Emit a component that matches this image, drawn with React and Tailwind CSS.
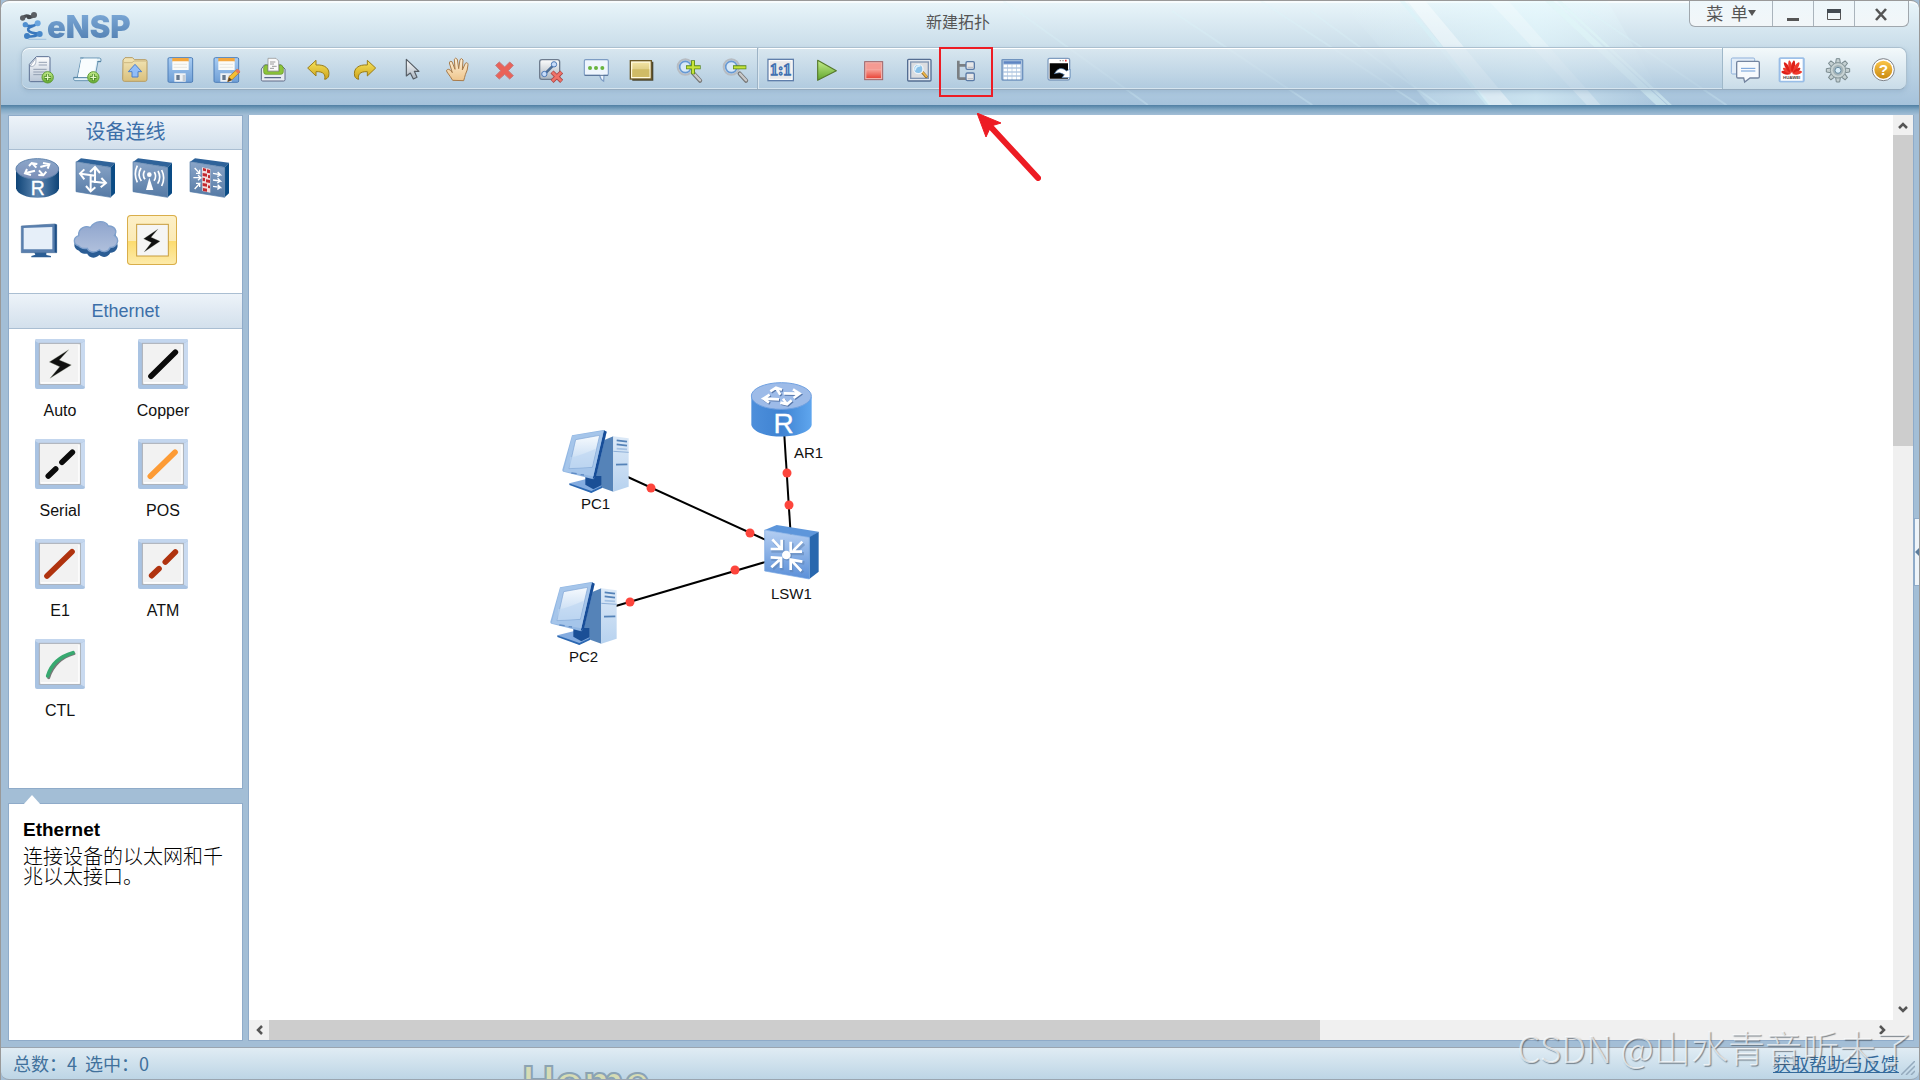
import React, { useState } from 'react';

// shared gradients, referenced by id from every icon below
function Gradients() {
  const list = [
    ['gPage', '#ffffff', '#b9c6d6'],
    ['gFolder', '#f3e6b8', '#d9c07c'],
    ['gDisk', '#a9cdf3', '#6f9fd6'],
    ['gYellow', '#f7e45c', '#cda31c'],
    ['gGreen', '#c6ee8c', '#5fa52c'],
    ['gRed', '#f8a49a', '#e9483b'],
    ['gSteel', '#fdfdfd', '#a9b4bf'],
    ['gNote', '#f1e2a2', '#cdb968'],
    ['gHand', '#fdf0d8', '#eec58c'],
    ['gHelp', '#fbc54a', '#c98a12'],
    ['gDevTop', '#8ba6c9', '#7c8fb8'],
    ['gDevice', '#8aa5c8', '#557aa5'],
    ['gCloud', '#8fa5cd', '#b0c0dc'],
    ['gSwitch', '#b5cff2', '#5a8fd8'],
    ['gScreen', '#f6fafe', '#b9d3ef'],
    ['gTower', '#dce9f7', '#b7d2ef'],
  ];
  return (
    <svg className="absolute h-0 w-0" aria-hidden="true">
      <defs>
        {list.map(([id, from, to]) => (
          <linearGradient key={id} id={id} x1="0" y1="0" x2="0" y2="1">
            <stop offset="0" stopColor={from} />
            <stop offset="1" stopColor={to} />
          </linearGradient>
        ))}
        <linearGradient id="gCylinder" x1="0" y1="0" x2="1" y2="0">
          <stop offset="0" stopColor="#0f4477" />
          <stop offset="0.5" stopColor="#5f88b3" />
          <stop offset="1" stopColor="#0f4477" />
        </linearGradient>
        <linearGradient id="gCylinderLight" x1="0" y1="0" x2="1" y2="0">
          <stop offset="0" stopColor="#4d8fdb" />
          <stop offset="0.5" stopColor="#3f83d2" />
          <stop offset="1" stopColor="#5fa6ee" />
        </linearGradient>
      </defs>
    </svg>
  );
}

const Plus = ({ x, y }) => (
  <g>
    <circle cx={x} cy={y} r="17" fill="url(#gGreen)" stroke="#5f9c35" strokeWidth="3" />
    <path d={`M${x - 10} ${y}h20M${x} ${y - 10}v20`} stroke="#3f7d1d" strokeWidth="8" />
    <path d={`M${x - 9} ${y}h18M${x} ${y - 9}v18`} stroke="#e4f9c4" strokeWidth="4" />
  </g>
);

const Disk = () => (
  <g>
    <rect x="12" y="14" width="74" height="74" rx="4" fill="url(#gDisk)" stroke="#4f7fb8" strokeWidth="3" />
    <path d="M25 15h49v12H25z" fill="#f4a840" />
    <path d="M25 25h49v26H25z" fill="#fbfbf8" />
    <path d="M29 34h40M29 43h40" stroke="#dcdcd8" strokeWidth="2" />
    <path d="M31 61h34v25H31z" fill="#eef1f4" />
    <path d="M37 66h10v15H37z" fill="#66788e" />
    <path d="M56 66h8v19h-8z" fill="#c5ccd3" />
  </g>
);

const Lens = () => (
  <g>
    <path d="M62 62L81 83" stroke="#777" strokeWidth="13" strokeLinecap="round" />
    <path d="M63 62L81 82" stroke="#c9c9c9" strokeWidth="7" strokeLinecap="round" />
    <circle cx="37" cy="42" r="23" fill="#c9dcef" stroke="#b7bcc2" strokeWidth="6" />
    <circle cx="37" cy="42" r="17" fill="#d8e9f8" stroke="#6799d3" strokeWidth="5" />
  </g>
);

const Undo = () => (
  <path
    d="M14 45L39 22v14c26-2 43 10 38 33-2 6-6 9-12 10 3-14-3-24-26-23v13z"
    fill="url(#gYellow)"
    stroke="#9a7d18"
    strokeWidth="3"
    strokeLinejoin="round"
  />
);

const toolIcons = {
  new: (
    <g>
      <path d="M13 34L34 11h37q4 0 4 4v67q0 4-4 4H17q-4 0-4-4z" fill="url(#gPage)" stroke="#5b6f92" strokeWidth="3" />
      <path d="M15 40q20 4 18-25z" fill="#fff" stroke="#8795ac" strokeWidth="2" />
      <path d="M41 28h25M41 36h25M25 49h40M25 57h40M25 65h28" stroke="#8492a6" strokeWidth="2.5" />
      <Plus x={68} y={73} />
    </g>
  ),
  newTopo: (
    <g>
      <path d="M28 15h57q7 0 5 10h-9L70 83H12q-6-1-4-10h11L29 24q2-7 8-9z" fill="#e3f1f8" stroke="#6995b4" strokeWidth="3" />
      <path d="M31 17h47L66 73H21z" fill="#f8fcfe" />
      <path d="M8 74h50M79 26h11" stroke="#4f7f9f" strokeWidth="3" />
      <Plus x={67} y={73} />
    </g>
  ),
  open: (
    <g>
      <path d="M15 21l6-7h22l7 6h32q5 0 5 5v53q0 7-5 7H19q-5 0-5-6z" fill="url(#gFolder)" stroke="#b69c62" strokeWidth="3" />
      <path d="M18 29h24l6-5h36" stroke="#bda569" strokeWidth="2" fill="none" />
      <path d="M51 34l20 22H60v16H42V56H31z" fill="#91bdf8" stroke="#4e7fc9" strokeWidth="3" strokeLinejoin="round" />
    </g>
  ),
  save: <Disk />,
  saveAs: (
    <g>
      <Disk />
      <path d="M53 86l4-15 24-22 9 8-24 23z" fill="#f4c033" stroke="#a56c25" strokeWidth="2" />
      <path d="M76 54l7-7 8 8-7 7z" fill="#e7785c" />
      <path d="M53 86l4-13 9 8z" fill="#5a3e22" />
    </g>
  ),
  print: (
    <g>
      <path d="M25 36h50l12 12v32q0 4-4 4H20q-4 0-4-4V48z" fill="#e7ecf2" stroke="#606b88" strokeWidth="3" />
      <path d="M27 36h8v20h34V36h8l5 8v12q0 8-8 8H30q-7 0-7-8V44z" fill="#8cc53a" stroke="#628e25" strokeWidth="2" />
      <path d="M36 16h24l8 8v30H36z" fill="#fafafa" stroke="#878787" strokeWidth="2" />
      <path d="M42 27h16M42 33h12M48 40h14M42 46h12" stroke="#888" strokeWidth="2.5" />
      <path d="M25 74h50" stroke="#5a6789" strokeWidth="4" />
    </g>
  ),
  undo: <Undo />,
  redo: (
    <g transform="matrix(-1 0 0 1 94 0)">
      <Undo />
    </g>
  ),
  select: (
    <path d="M34 19v50l12-9 9 18 11-5-8-18h14z" fill="url(#gSteel)" stroke="#555c64" strokeWidth="3.5" strokeLinejoin="round" />
  ),
  hand: (
    <path
      d="M35 82Q29 72 18 57q-4-8 5-8 6 1 11 10L25 30q1-8 8-4l9 23-2-30q3-7 9 0l4 28 4-27q5-7 9 1l-2 30 9-20q7-5 8 4-1 17-8 30-2 8-5 18z"
      fill="url(#gHand)"
      stroke="#a77b4b"
      strokeWidth="3"
      strokeLinejoin="round"
    />
  ),
  remove: (
    <path
      d="M23 37l11-10 16 15 15-15 11 10-15 16 15 15-11 10-15-14-16 14-11-10 15-15z"
      fill="#ea6258"
      stroke="#c2787c"
      strokeWidth="3"
      strokeLinejoin="round"
    />
  ),
  removeLink: (
    <g>
      <rect x="17" y="20" width="60" height="59" rx="7" fill="url(#gSteel)" stroke="#6e7c8e" strokeWidth="4" />
      <path d="M31 64L61 34" stroke="#4e6f98" strokeWidth="8" />
      <circle cx="60" cy="34" r="8" fill="#c6dcfa" stroke="#4d79b5" strokeWidth="3" />
      <circle cx="31" cy="63" r="8" fill="#c6dcfa" stroke="#4d79b5" strokeWidth="3" />
      <path d="M54 57l29 28M83 57L54 85" stroke="#a94545" strokeWidth="13" />
      <path d="M55 58l27 26M82 58L55 84" stroke="#ef7267" strokeWidth="8" />
    </g>
  ),
  text: (
    <g>
      <path d="M17 20h64q4 0 4 4v39q0 4-4 4h-9l-1 18q-9-5-12-18H17q-4 0-4-4V24q0-4 4-4z" fill="#eef5fd" stroke="#7e9dc4" strokeWidth="3.5" />
      <path d="M14 67h70" stroke="#567095" strokeWidth="3" />
      <circle cx="30" cy="45" r="6" fill="#68b43f" />
      <circle cx="48" cy="45" r="6" fill="#68b43f" />
      <circle cx="67" cy="45" r="6" fill="#68b43f" />
    </g>
  ),
  palette: (
    <g>
      <path d="M15 26h67v57H19z" fill="#4b4732" />
      <rect x="13" y="23" width="63" height="55" fill="#fff9dc" stroke="#6c5928" strokeWidth="4" />
      <path d="M19 29h51v43H19z" fill="url(#gNote)" />
      <path d="M19 49h51v23H19z" fill="#d0bb65" />
    </g>
  ),
  zoomIn: (
    <g>
      <Lens />
      <path d="M39 43h44M60 22v42" stroke="#57851b" strokeWidth="12" />
      <path d="M41 43h40M60 24v38" stroke="#c6e43b" strokeWidth="7" />
    </g>
  ),
  zoomOut: (
    <g>
      <Lens />
      <path d="M42 43h40" stroke="#57851b" strokeWidth="12" />
      <path d="M44 43h36" stroke="#c6e43b" strokeWidth="7" />
    </g>
  ),
  actual: (
    <g>
      <rect x="9" y="19" width="76" height="64" fill="#e9e9ea" stroke="#607fab" strokeWidth="4" />
      <rect x="13" y="23" width="68" height="56" fill="none" stroke="#fff" strokeWidth="3" />
      <text x="47" y="67" textAnchor="middle" fontFamily="Liberation Serif, serif" fontWeight="700" fontSize="48" fill="#a9cdf5" stroke="#3f6fae" strokeWidth="4">
        1:1
      </text>
    </g>
  ),
  start: (
    <path d="M20 22l56 31-56 29z" fill="url(#gGreen)" stroke="#55792c" strokeWidth="3.5" strokeLinejoin="round" />
  ),
  stop: (
    <g>
      <rect x="20" y="26" width="54" height="54" fill="#f2b1ab" stroke="#9e6569" strokeWidth="3" />
      <rect x="25" y="31" width="44" height="18" fill="#f59a92" />
      <rect x="25" y="49" width="44" height="26" fill="url(#gRed)" />
    </g>
  ),
  capture: (
    <g>
      <rect x="11" y="19" width="70" height="65" rx="3" fill="#e3e8ef" stroke="#546d92" strokeWidth="4" />
      <rect x="20" y="27" width="53" height="49" fill="#dbdde0" stroke="#8195b2" strokeWidth="4" />
      <path d="M55 58l12 13" stroke="#8d6a2a" strokeWidth="9" strokeLinecap="round" />
      <path d="M55 57l12 13" stroke="#f1b747" strokeWidth="5" strokeLinecap="round" />
      <circle cx="43" cy="48" r="14" fill="#8ac2ea" stroke="#eef3f7" strokeWidth="4" />
      <path d="M33 52q2-15 16-13" stroke="#d9effc" strokeWidth="5" fill="none" />
    </g>
  ),
  tree: (
    <g>
      <path d="M25 23v51q0 3 3 3h22M25 37h25" fill="none" stroke="#7b7f83" strokeWidth="8" />
      <rect x="48" y="26" width="25" height="23" rx="4" fill="#e7e7e8" stroke="#5b7ba6" strokeWidth="4" />
      <rect x="48" y="60" width="25" height="23" rx="4" fill="#e7e7e8" stroke="#5b7ba6" strokeWidth="4" />
      <path d="M53 43h16M53 77h16" stroke="#c0c2c5" strokeWidth="4" />
    </g>
  ),
  table: (
    <g>
      <rect x="15" y="20" width="62" height="61" rx="2" fill="#adc4df" stroke="#6f93bf" strokeWidth="4" />
      <path d="M20 25h52v7H20z" fill="#5f86c3" />
      {[35, 47, 59, 71].map((y) =>
        [20, 33, 46, 59].map((x) => <rect key={`${x}-${y}`} x={x} y={y} width="11" height="8" fill="#fdfefe" />)
      )}
    </g>
  ),
  console: (
    <g>
      <rect x="15" y="16" width="65" height="65" rx="5" fill="#fff" stroke="#7f9cbf" strokeWidth="4" />
      <path d="M20 31h55v46H20z" fill="#050505" />
      <path d="M50 23h4M58 23h4" stroke="#999" strokeWidth="4" />
      <path d="M66 23h5" stroke="#e34040" strokeWidth="5" />
      <path d="M34 62q16-27 37-8l10-6v26H57l7-9q-12-10-30-3z" fill="#fff" stroke="#4f7fb3" strokeWidth="2" />
    </g>
  ),
  forum: (
    <g>
      <rect x="4" y="15" width="70" height="48" rx="4" fill="#e2edf8" stroke="#8fb1da" strokeWidth="3" />
      <path d="M24 25h60q4 0 4 4v42q0 4-4 4H60L44 87l-3-12H24q-4 0-4-4V29q0-4 4-4z" fill="#f7fafd" stroke="#7485a0" strokeWidth="4" />
      <path d="M33 46h43M33 54h43" stroke="#6b9bd6" strokeWidth="3" />
    </g>
  ),
  site: (
    <g>
      <rect x="9" y="14" width="76" height="73" rx="4" fill="#9fc2ea" stroke="#8fb6e3" strokeWidth="2" />
      <path d="M14 18h66v65H14z" fill="#fff" />
      {[-76, -54, -32, -10, 10, 32, 54, 76].map((a, i) => (
        <path key={a} d="M0-4C-8-16-9-32-2-42H2C9-32 8-16 0-4z" fill={i % 2 ? '#f0392c' : '#dd2018'} transform={`translate(47 64) rotate(${a}) scale(.8 ${Math.abs(a) > 50 ? 0.75 : 1})`} />
      ))}
      <text x="47" y="79" textAnchor="middle" fontFamily="Liberation Sans, sans-serif" fontWeight="700" fontSize="13" fill="#444">
        HUAWEI
      </text>
    </g>
  ),
  settings: (
    <g>
      {[0, 45, 90, 135, 180, 225, 270, 315].map((a) => (
        <path key={a} d="M-7-22L-5-35H5L7-22z" fill="#c4d0d2" stroke="#7b8b90" strokeWidth="3" transform={`translate(51 52) rotate(${a})`} />
      ))}
      <circle cx="51" cy="52" r="23" fill="#c8d3d4" stroke="#8b9b9f" strokeWidth="3" />
      <circle cx="51" cy="52" r="16" fill="#a4b4b9" />
      <circle cx="51" cy="52" r="9" fill="#d8edf8" stroke="#6b8da2" strokeWidth="3" />
    </g>
  ),
  help: (
    <g>
      <circle cx="49" cy="50" r="33" fill="#fff" stroke="#7d8187" strokeWidth="3" />
      <circle cx="49" cy="50" r="27" fill="url(#gHelp)" />
      <text x="49" y="67" textAnchor="middle" fontFamily="Liberation Sans, sans-serif" fontWeight="700" fontSize="46" fill="#fff">
        ?
      </text>
    </g>
  ),
};

const mainTools = [
  ['new', 'New'], ['newTopo', 'New topology'], ['open', 'Open'], ['save', 'Save'], ['saveAs', 'Save as'],
  ['print', 'Print'], ['undo', 'Undo'], ['redo', 'Redo'], ['select', 'Select'], ['hand', 'Drag'],
  ['remove', 'Delete'], ['removeLink', 'Delete link'], ['text', 'Text'], ['palette', 'Palette'],
  ['zoomIn', 'Zoom in'], ['zoomOut', 'Zoom out'],
];
const runTools = [
  ['actual', 'Actual size'], ['start', 'Start'], ['stop', 'Stop'], ['capture', 'Capture'],
  ['tree', 'Tree'], ['table', 'Interfaces'], ['console', 'Console'],
];
const sideTools = [['forum', 'Forum'], ['site', 'Website'], ['settings', 'Settings'], ['help', 'Help']];

function ToolButton({ name, label }) {
  return (
    <button type="button" aria-label={label} className="relative h-8 w-8 shrink-0">
      <svg viewBox="0 0 96 96" className="h-8 w-8">{toolIcons[name]}</svg>
      {name === 'tree' && <span className="absolute -inset-x-[11px] -top-1.5 -bottom-3 border-2 border-[#ed1c24]" />}
    </button>
  );
}

const Box = ({ children }) => (
  <g>
    <path d="M19 26l14-10 102 13-13 14z" fill="#2f639a" />
    <path d="M122 43l13-14v92l-13 12z" fill="#0a4b85" />
    <path d="M18 26l104 17v90L18 116z" fill="url(#gDevice)" stroke="#557ca8" strokeWidth="2" />
    {children}
  </g>
);

const Bolt = ({ x, y }) => (
  <path d="M58 0L0 37l31 14L2 86l64-40L30 31z" transform={`translate(${x} ${y})`} fill="#101010" stroke="#99a08c" strokeWidth="1" />
);

const deviceIcons = {
  router: (
    <g>
      <path d="M9 50v56c8 38 121 38 129 0V50z" fill="url(#gCylinder)" />
      <ellipse cx="73" cy="48" rx="64" ry="31" fill="url(#gDevTop)" stroke="#5e82ac" strokeWidth="3" />
      <g stroke="#fff" strokeWidth="6" fill="none">
        <path d="M70 44L58 31M48 39l8-9 17 3M66 53L38 60M42 48l-6 13 18 5M82 42l24-7M90 30l19 4-5 13M78 52l12 14M76 66l15 1 9-11" />
      </g>
      <text x="74" y="127" textAnchor="middle" fontFamily="Liberation Sans, sans-serif" fontSize="58" fill="#fff" stroke="#fff" strokeWidth="1">
        R
      </text>
    </g>
  ),
  switch: (
    <Box>
      <g stroke="#fff" strokeWidth="6" fill="none">
        <path d="M75 44v46M32 62l44 6M62 113V66M106 90l-46-5" />
        <path d="M60 57l15-15 15 18M43 49L30 62l13 17M48 99l14 16 14-12M94 75l14 15-16 13" />
      </g>
    </Box>
  ),
  wireless: (
    <Box>
      <path d="M67 74l12 37H57z" fill="#fff" />
      <circle cx="67" cy="65" r="7" fill="#fff" />
      <g stroke="#fff" strokeWidth="5" fill="none">
        <path d="M53 53q-8 14 1 26M42 45q-12 20 1 39M31 38q-12 25 0 50M82 57q8 14-1 26M93 54q11 19-1 38M104 51q12 24 0 48" />
      </g>
    </Box>
  ),
  firewall: (
    <Box>
      <path d="M54 43l25 5v71l-24-5z" fill="#f1dcdc" />
      <g fill="#c32a30">
        <path d="M57 45l9 2v8l-9-2zM69 49l9 2v10l-9-2zM56 60l13 2v9l-13-2zM72 66l6 1v9l-6-1zM56 74l7 1v10l-7-1zM66 79l12 2v9l-12-2zM56 90l13 2v9l-13-2zM72 97l6 1v8l-6-1zM57 105l12 2v9l-12-2z" />
      </g>
      <g stroke="#fff" strokeWidth="4" fill="none">
        <path d="M32 45l15 16v-11M47 61H36M28 74h22l-8-8M50 74l-8 8M32 108l15-17H36M47 91v11M87 61l22 4-8-8M109 65l-9 6M87 81l22 3-8-8M109 84l-9 6M87 100l22 3-8-8M109 103l-9 6" />
      </g>
    </Box>
  ),
  terminal: (
    <g>
      <path d="M62 108h38v12l14 3v4H55v-4l12-4z" fill="#2a5d94" />
      <path d="M25 33l100-6 6 2v84H25z" fill="#597fae" stroke="#4b719d" strokeWidth="2" />
      <path d="M125 27l6 2v84l-6-2z" fill="#1d4f86" />
      <path d="M32 39l86-3v67H32z" fill="#e6eff9" />
    </g>
  ),
  cloud: (
    <g>
      <path d="M25 101C5 94 8 72 24 66 22 40 48 35 59 42 74 20 104 22 113 39c20-1 28 17 18 30 20 14 6 40-12 38-8 16-24 15-33 7-18 16-34 4-36-4-8 1-20-1-25-9z" transform="translate(2 6)" fill="#2a5c94" />
      <path d="M25 93C5 86 8 68 24 62 22 36 48 31 59 38 74 14 104 16 113 33c20-1 28 17 18 28 20 12 6 38-12 36-8 16-24 15-33 7-18 14-34 4-36-4-8 1-20 1-25-7z" transform="translate(2 0)" fill="url(#gCloud)" stroke="#7fa0cc" strokeWidth="4" />
    </g>
  ),
  link: (
    <g>
      <rect x="29" y="28" width="95" height="95" fill="#f5f5f5" stroke="#c79c3c" strokeWidth="3" />
      <g transform="translate(22 10) scale(.75 .8)">
        <Bolt x={37} y={40} />
      </g>
    </g>
  ),
};

const devices = [
  ['router', 'Router'], ['switch', 'Switch'], ['wireless', 'WLAN'], ['firewall', 'Firewall'],
  ['terminal', 'Terminal'], ['cloud', 'Cloud'], ['link', 'Link'],
];

const cables = [
  { name: 'Auto', art: <Bolt x={43} y={32} /> },
  { name: 'Copper', art: <path d="M39 112L112 40" stroke="#0b0b0b" strokeWidth="17" strokeLinecap="round" /> },
  { name: 'Serial', art: <path d="M40 111L62 90M81 70L112 40" stroke="#0b0b0b" strokeWidth="17" strokeLinecap="round" /> },
  { name: 'POS', art: <path d="M37 112L111 40" stroke="#fd9b35" strokeWidth="17" strokeLinecap="round" /> },
  { name: 'E1', art: <path d="M36 111L111 38" stroke="#b0330f" strokeWidth="17" strokeLinecap="round" /> },
  { name: 'ATM', art: <path d="M41 110L63 89M82 69L112 39" stroke="#b0330f" strokeWidth="17" strokeLinecap="round" /> },
  {
    name: 'CTL',
    art: (
      <g fill="none" strokeLinecap="round">
        <path d="M41 116Q60 60 117 44" stroke="#777" strokeWidth="9" />
        <path d="M38 111Q53 58 114 41" stroke="#37a970" strokeWidth="11" />
      </g>
    ),
  },
];

function CableTile({ art }) {
  return (
    <svg viewBox="0 0 150 150" className="h-[50px] w-[50px]">
      <rect width="150" height="150" rx="6" fill="#a9c3e2" />
      <path d="M0 6q0-6 6-6h138q6 0 6 6L134 14H14z" fill="#c3d6ee" />
      <path d="M150 6v138l-14-8V14z" fill="#c9daf0" />
      <rect x="13" y="13" width="123" height="123" fill="#f2f2f2" stroke="#a9aeb5" strokeWidth="3" />
      <path d="M18 132h114V18" fill="none" stroke="#fff" strokeWidth="4" />
      {art}
    </svg>
  );
}

function PcIcon() {
  return (
    <svg viewBox="0 0 204 192" className="h-16 w-[68px]">
      <path d="M118 34l36-15v166l-46-16-10-30z" fill="#5583b8" />
      <path d="M154 19l46 6v145l-46 15z" fill="url(#gTower)" />
      <path d="M154 64l46 3" stroke="#8fb0d8" strokeWidth="3" />
      <path d="M164 31l31 4M164 43l31 4M162 104l34-1" stroke="#5583b8" strokeWidth="5" />
      <path d="M164 56l31 2" stroke="#a5c2e3" strokeWidth="5" />
      <path d="M22 160l54-14 44 22-32 20z" fill="#84ace0" />
      <path d="M22 160l66 23 32-15v6l-32 15-66-24z" fill="#2c68b2" />
      <path d="M70 138h48v28l-24 12-24-14z" fill="#1a4f96" />
      <path d="M30 16L124 0l10 5-32 133-8 10L4 125q-4-2-3-6z" fill="#92b7e3" />
      <path d="M126 1l8 4-32 135-10 7z" fill="#174d98" />
      <path d="M31 17l94-15-31 137-89-15z" fill="#a5c5ea" />
      <path d="M41 29l72-13-22 96-70 4z" fill="url(#gScreen)" stroke="#7fa5d4" strokeWidth="2" />
      <path d="M24 82Q52 78 101 56L90 111l-68 4z" fill="#bdd6f1" opacity=".6" />
      <path d="M28 129l16 2M56 134l10 1" stroke="#5f8bc4" strokeWidth="4" />
    </svg>
  );
}

function RouterIcon() {
  return (
    <svg viewBox="0 0 183 165" className="h-[55px] w-[61px] overflow-visible">
      <path d="M1 45v84c12 46 169 46 181 0V45z" fill="url(#gCylinderLight)" />
      <ellipse cx="91" cy="42" rx="90" ry="40" fill="#9dbbe8" stroke="#70a1e1" strokeWidth="3" />
      <g fill="none">
        {[['#5878ab', 3], ['#fff', 0]].map(([color, shift]) => (
          <path
            key={color}
            d="M88 38L76 19M58 28l17-11 18 6M84 52L38 50M56 38L37 50l17 12M98 34l40 1M126 22l20 13-18 13M96 50l10 14M88 62l20 5 14-12"
            transform={`translate(${shift} ${shift})`}
            stroke={color}
            strokeWidth="8"
          />
        ))}
      </g>
      <text x="98" y="152" textAnchor="middle" fontFamily="Liberation Sans, sans-serif" fontSize="84" fill="#fff" stroke="#fff" strokeWidth="1">
        R
      </text>
    </svg>
  );
}

function SwitchIcon() {
  return (
    <svg viewBox="0 0 165 165" className="h-[55px] w-[55px]">
      <path d="M2 15L38 0l126 20-27 18z" fill="#5d96db" />
      <path d="M136 37l28-17v120l-28 22z" fill="#2867ae" />
      <path d="M2 15l134 22v125L2 138z" fill="url(#gSwitch)" stroke="#79a7e2" strokeWidth="2" />
      <circle cx="70" cy="93" r="14" fill="#587cab" opacity=".5" />
      <g stroke="#587cab" strokeWidth="10" fill="none" transform="translate(3 3)" opacity=".45">
        <path d="M27 47l22 23M54 42v33H19M117 53L90 78M81 52v31h36M23 129l24-22M19 99l32 3v31M114 140l-26-28M80 139v-34l38 6" />
      </g>
      <g stroke="#fff" strokeWidth="8" fill="none">
        <path d="M25 43l24 26M53 44v28H20M115 50L88 77M80 50v30h34M22 127l25-23M20 97l31 2v30M112 138l-27-29M80 135v-31l35 6" />
      </g>
      <circle cx="67" cy="90" r="13" fill="#fff" />
    </svg>
  );
}

// positions are relative to the canvas origin
const links = [
  { from: [535, 315], to: [542, 425], dots: [[538, 358], [540, 390]] },
  { from: [370, 358], to: [530, 431], dots: [[402, 373], [501, 418]] },
  { from: [360, 493], to: [530, 443], dots: [[381, 487], [486, 455]] },
];

function Topology() {
  return (
    <div className="absolute inset-0 overflow-hidden font-['Liberation_Sans',sans-serif] text-[15px] leading-5 text-[#111]">
      <svg className="absolute inset-0 h-full w-full">
        {links.map((l) => (
          <g key={l.from.join()}>
            <line x1={l.from[0]} y1={l.from[1]} x2={l.to[0]} y2={l.to[1]} stroke="#000" strokeWidth="2" />
            {l.dots.map(([x, y]) => (
              <circle key={x} cx={x} cy={y} r="4.5" fill="#fd453c" />
            ))}
          </g>
        ))}
      </svg>
      <div className="absolute left-[313px] top-[315px]"><PcIcon /></div>
      <span className="absolute left-[332px] top-[379px]">PC1</span>
      <div className="absolute left-[301px] top-[467px]"><PcIcon /></div>
      <span className="absolute left-[320px] top-[532px]">PC2</span>
      <div className="absolute left-[502px] top-[267px]"><RouterIcon /></div>
      <span className="absolute left-[545px] top-[328px]">AR1</span>
      <div className="absolute left-[515px] top-[410px]"><SwitchIcon /></div>
      <span className="absolute left-[522px] top-[469px]">LSW1</span>
    </div>
  );
}

function Chevron({ d }) {
  return (
    <svg viewBox="0 0 20 20" className="h-5 w-5">
      <path d={d} fill="none" stroke="#555" strokeWidth="2.5" />
    </svg>
  );
}

function Glare() {
  return (
    <svg className="pointer-events-none absolute right-0 top-0 h-full w-[920px]" viewBox="0 0 920 105">
      <defs>
        <linearGradient id="gGlow" x1="0" y1="0" x2="1" y2="0">
          <stop offset="0" stopColor="#e6fbff" stopOpacity="0" />
          <stop offset=".6" stopColor="#e6fbff" stopOpacity=".55" />
          <stop offset="1" stopColor="#e6fbff" stopOpacity="0" />
        </linearGradient>
      </defs>
      <path d="M340 0h270l60 105H430z" fill="url(#gGlow)" />
      <path d="M408 0h18l88 105h-24z" fill="#fff" opacity=".4" />
      <path d="M400 0h5l88 105h-6z" fill="#d8f6fa" opacity=".4" />
      <path d="M490 0h20l93 105h-14z" fill="#fff" opacity=".25" />
      <path d="M547 0h8l115 105h-11zM559 0h4l112 105h-4z" fill="#dff8f8" opacity=".5" />
      <path d="M0 0l146 105M170 10l142 95M260 0l160 105M310 10l130 95M590 10l140 95" stroke="#dcf5fb" strokeWidth="2" opacity=".25" />
    </svg>
  );
}

function Logo() {
  return (
    <svg viewBox="0 0 84 90" className="h-[30px] w-7">
      <path d="M11 21Q20 10 32 18 40 20 45 12" stroke="#4a4e53" strokeWidth="9" fill="none" strokeLinecap="round" />
      <circle cx="11" cy="21" r="8" fill="#5a5e63" />
      <circle cx="30" cy="18" r="7" fill="#44484d" />
      <circle cx="45" cy="12" r="9" fill="#5a5e63" />
      <path d="M56 38Q38 50 20 42M44 44Q24 50 28 58 32 66 62 68M62 69Q40 80 26 75" stroke="#3a78bd" strokeWidth="8" fill="none" strokeLinecap="round" />
      <circle cx="19" cy="41" r="8" fill="#4f8fd0" />
      <circle cx="56" cy="37" r="9" fill="#6ba6df" />
      <circle cx="24" cy="75" r="9" fill="#3f7fc2" />
      <circle cx="62" cy="69" r="9" fill="#4a89ca" />
      <path d="M28 85h54" stroke="#a8c6e0" strokeWidth="4" />
    </svg>
  );
}

function Header() {
  return (
    <header className="relative h-[105px] shrink-0 overflow-hidden rounded-t-lg border-t border-[#999] bg-gradient-to-b from-[#e9f5fa] via-[#c9dde9] via-45% to-[#a5c2db] shadow-[inset_0_2px_0_#ffffffb0]">
      <Glare />
      <div className="relative grid h-[46px] grid-cols-3 items-start">
        <div className="flex items-center pl-[18px] pt-2">
          <Logo />
          <span className="bg-gradient-to-b from-[#82aedb] to-[#4f7db0] bg-clip-text pt-0.5 font-['Inter',sans-serif] text-[31px] leading-8 font-black text-transparent">
            eNSP
          </span>
        </div>
        <h1 className="pt-2 pr-1 text-center text-base leading-6 text-[#555]">新建拓扑</h1>
        <div className="mr-2.5 flex h-[26px] justify-self-end divide-x divide-[#aab4bc] rounded-b-md border border-t-0 border-[#a0a7ad] bg-gradient-to-b from-[#eef7fb] to-[#f2f6f8] text-[#555]">
          <button type="button" className="flex w-[83px] items-center justify-center pb-0.5 text-[17px] leading-6">
            菜&nbsp; 单
            <svg viewBox="0 0 8 6" className="h-1.5 w-2"><path d="M0 0h8L4 6z" fill="#555" /></svg>
          </button>
          <button type="button" aria-label="Minimize" className="flex w-[41px] justify-center">
            <svg viewBox="0 0 14 26" className="h-[26px] w-3.5"><path d="M1 17h12v3H1z" fill="#555" /></svg>
          </button>
          <button type="button" aria-label="Maximize" className="flex w-[41px] justify-center">
            <svg viewBox="0 0 14 26" className="h-[26px] w-3.5"><path d="M.5 8.500h13v10H.5z" fill="none" stroke="#555" /><path d="M0 8h14v4H0z" fill="#444b52" /></svg>
          </button>
          <button type="button" aria-label="Close" className="flex w-[53px] justify-center">
            <svg viewBox="0 0 14 26" className="h-[26px] w-3.5"><path d="M2 8l10 11M12 8L2 19" stroke="#555" strokeWidth="2.600" /></svg>
          </button>
        </div>
      </div>
      <div className="relative ml-5 mr-3 flex h-[43px] items-center rounded-lg border border-[#abc0cf] border-b-[#96acbf] bg-gradient-to-b from-[#dfebf2]/70 to-[#b1cbdf]/60 shadow-[inset_0_1px_0_#fff,inset_0_-1px_0_#d5e4ee,0_2px_4px_#7f9fbd60]">
        <div className="ml-[3px] flex w-[726px] shrink-0 justify-between">
          {mainTools.map(([name, label]) => <ToolButton key={name} name={name} label={label} />)}
        </div>
        <div className="mx-1.5 w-0.5 shrink-0 self-stretch border-l border-[#9db3c6] bg-[#dce8f0]" />
        <div className="flex w-[310px] shrink-0 justify-between">
          {runTools.map(([name, label]) => <ToolButton key={name} name={name} label={label} />)}
        </div>
        <div className="ml-auto flex w-[184px] items-center justify-around self-stretch rounded-r-lg border-l border-[#9fb8c9] bg-gradient-to-b from-[#f3f9fb] to-[#c9dce8]">
          {sideTools.map(([name, label]) => <ToolButton key={name} name={name} label={label} />)}
        </div>
      </div>
    </header>
  );
}

const sectionTitle =
  'flex items-center justify-center border-b border-[#aabed2] bg-gradient-to-b from-[#edf3f9] to-[#d3e0ec] text-[#3c6fa8]';

function Sidebar() {
  const [active, setActive] = useState('link');

  return (
    <aside className="flex w-[235px] shrink-0 flex-col gap-3.5">
      <section className="flex flex-1 flex-col border border-[#8fabc9] bg-white">
        <h2 className={`${sectionTitle} h-[34px] pb-1 text-xl leading-6`}>设备连线</h2>
        <div className="grid grid-cols-4 justify-items-center gap-y-3 pt-[3px] pr-1 pb-7">
          {devices.map(([name, label]) => (
            <button
              key={name}
              type="button"
              aria-label={label}
              onClick={() => setActive(name)}
              className={`h-[50px] w-[50px] rounded-sm ${
                active === name
                  ? 'bg-[linear-gradient(#fdf0c8_0%,#fbeab6_52%,#fcdc70_53%,#fdebac_100%)] shadow-[inset_0_0_0_1px_#d9ae4a]'
                  : ''
              }`}
            >
              <svg viewBox="0 0 150 150" className="h-[50px] w-[50px]">{deviceIcons[name]}</svg>
            </button>
          ))}
        </div>
        <h2 className={`${sectionTitle} h-9 border-t font-['Liberation_Sans',sans-serif] text-lg leading-6`}>Ethernet</h2>
        <div className="grid grid-cols-[102px_104px] gap-y-[18px] pt-2.5">
          {cables.map((c) => (
            <button key={c.name} type="button" className="flex flex-col items-center gap-3 font-['Liberation_Sans',sans-serif] text-base leading-5 text-[#111]">
              <CableTile art={c.art} />
              {c.name}
            </button>
          ))}
        </div>
      </section>
      <section className="relative h-[238px] shrink-0 border border-[#8fabc9] bg-white px-3.5 pt-3.5">
        <svg viewBox="0 0 18 10" className="absolute -top-[9px] left-3.5 h-2.5 w-[18px]"><path d="M0 10L9 0l9 10z" fill="#fff" /></svg>
        <h3 className="font-['Liberation_Sans',sans-serif] text-[19px] leading-6 font-bold text-black">Ethernet</h3>
        <p className="pt-1 text-xl leading-5 font-light text-black">连接设备的以太网和千兆以太接口。</p>
      </section>
    </aside>
  );
}

function Workspace() {
  return (
    <main className="grid min-w-0 flex-1 grid-cols-[1fr_20px] grid-rows-[1fr_20px] border border-t-0 border-[#8fabc9] bg-[#f0f0f0]">
      <div className="relative bg-white">
        <Topology />
      </div>
      <div className="flex flex-col">
        <button type="button" aria-label="Scroll up"><Chevron d="M6 13l4-4 4 4" /></button>
        <div className="flex-1">
          <div className="h-[36%] bg-[#cdcdcd]" />
        </div>
        <button type="button" aria-label="Scroll down"><Chevron d="M6 7l4 4 4-4" /></button>
      </div>
      <div className="flex">
        <button type="button" aria-label="Scroll left"><Chevron d="M13 6l-4 4 4 4" /></button>
        <div className="flex-1">
          <div className="h-full w-[65.500%] bg-[#cdcdcd]" />
        </div>
        <button type="button" aria-label="Scroll right"><Chevron d="M7 6l4 4-4 4" /></button>
      </div>
    </main>
  );
}

export default function App() {
  return (
    <div className="relative flex h-screen flex-col overflow-hidden border-x border-[#999] bg-[#a3bed6] font-['Noto_Sans_CJK_SC',sans-serif]">
      <Gradients />
      <Header />
      <div className="relative flex min-h-0 flex-1 gap-[5px] bg-[linear-gradient(#4f7fa3_0,#84aac6_5px,#a3bed6_10px)] pt-2.5 pr-[5px] pb-1.5 pl-[7px]">
        <Sidebar />
        <Workspace />
        {/* collapsed right panel handle */}
        <button type="button" aria-label="Expand" className="absolute right-0 top-[413px] flex h-[68px] w-[5px] items-center border border-r-0 border-[#8fabc9] bg-[#eef4f9]">
          <svg viewBox="0 0 4 8" className="h-2 w-1"><path d="M4 0v8L0 4z" fill="#5b7c9c" /></svg>
        </button>
      </div>
      <footer className="relative flex h-[33px] shrink-0 items-center justify-between overflow-hidden rounded-b-lg border-y border-[#9aa5b0] bg-gradient-to-b from-[#e0ecf4] to-[#bdd5e5] pb-0.5 pl-3 pr-5 text-lg leading-6 text-[#41719c]">
        <p>总数：4&nbsp; 选中：0</p>
        <span className="absolute left-[521px] top-[9px] font-['Liberation_Sans',sans-serif] text-[46px] leading-[50px] font-bold text-[#d6dcb4] [-webkit-text-stroke:2px_#8ba3b4]">
          Home
        </span>
        <a href="#help" className="text-[#336a9b] underline">获取帮助与反馈</a>
        <svg viewBox="0 0 14 14" className="absolute right-1 bottom-1 h-3.5 w-3.5">
          <path d="M0 14L14 0M5 14l9-9M10 14l4-4" stroke="#94aabd" strokeWidth="1.500" />
        </svg>
      </footer>

      <svg viewBox="0 0 64 68" className="pointer-events-none absolute left-[976px] top-[113px] h-[68px] w-16">
        <path d="M12 12L61 65" stroke="#ed1c24" strokeWidth="6" strokeLinecap="round" />
        <path d="M0 0l24 10-10 3-5 11z" fill="#ed1c24" stroke="#ed1c24" />
      </svg>
      <span className="pointer-events-none absolute right-1.5 bottom-2 text-[37px] leading-[50px] font-light whitespace-nowrap text-white/70 [text-shadow:1px_1px_1px_#4a5560b0]">
        CSDN @山水青音听未了
      </span>
    </div>
  );
}
